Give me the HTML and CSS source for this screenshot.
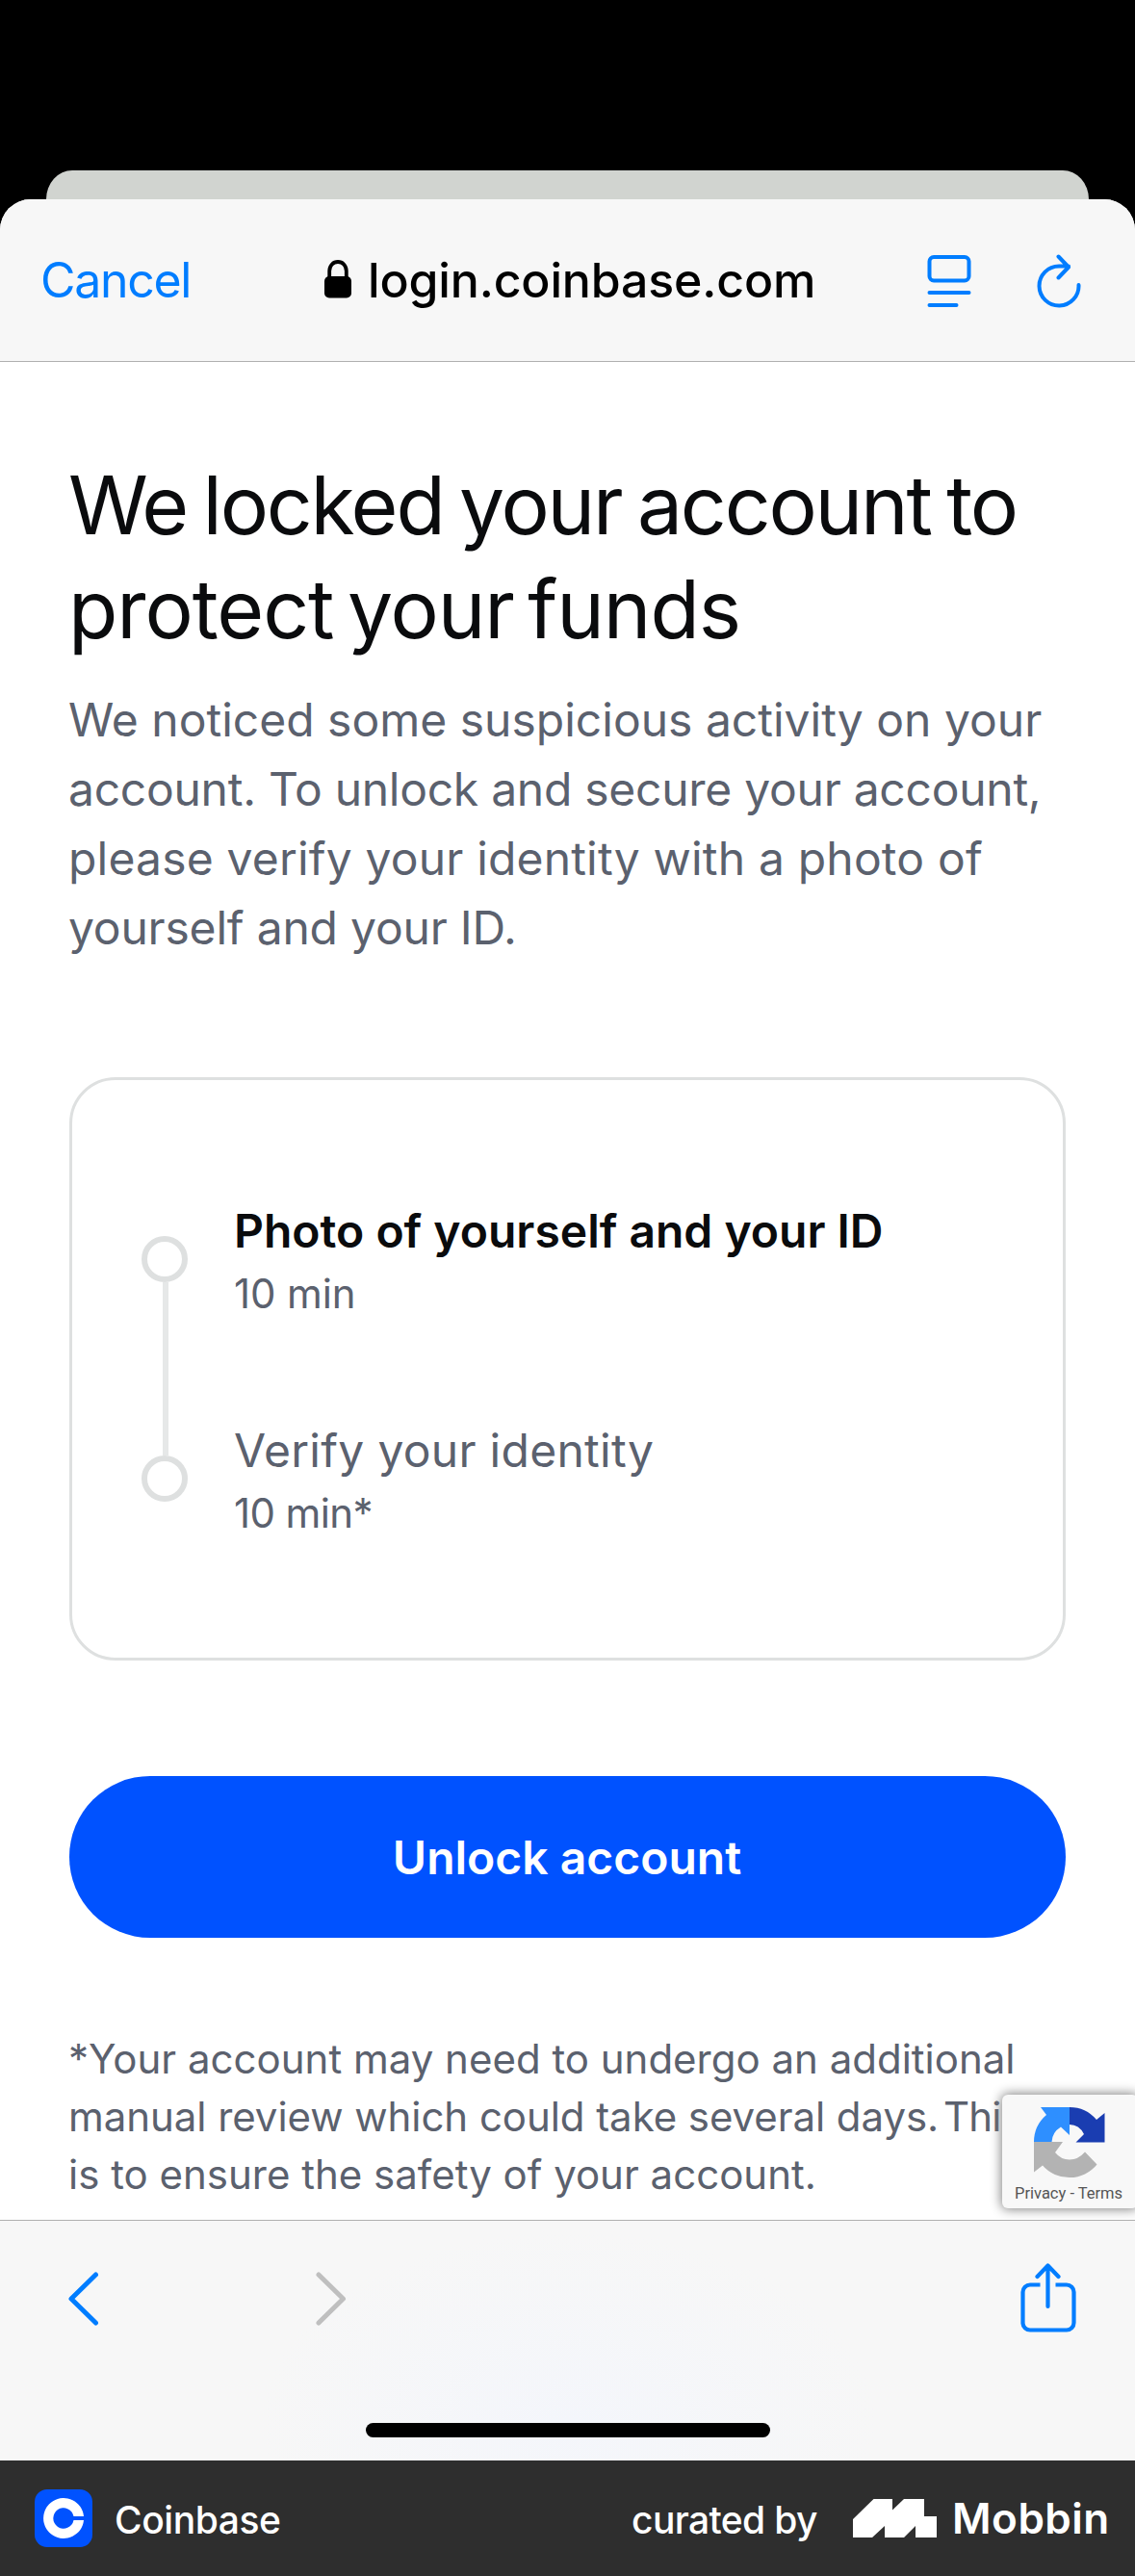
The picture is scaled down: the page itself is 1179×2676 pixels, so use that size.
FILE: index.html
```html
<!DOCTYPE html>
<html lang="en">
<head>
<meta charset="utf-8">
<title>We locked your account</title>
<link rel="stylesheet" href="styles.css">
</head>
<body>
<div class="backdrop"><div class="back-sheet"></div></div>
<div class="sheet">
  <header class="nav">
    <a class="cancel">Cancel</a>
    <div class="address">
      <svg class="lock" width="28" height="40" viewBox="0 0 28 40"><path d="M5.2 19V11.5C5.2 6 9 2 14 2s8.800 4 8.800 9.500V19" fill="none" stroke="#000" stroke-width="3.800"/><rect y="17" width="28" height="22.500" rx="5" fill="#000"/></svg>
      <span class="domain">login.coinbase.com</span>
    </div>
    <div class="nav-actions">
      <svg width="46" height="56" viewBox="0 0 46 56" fill="none" stroke="#007dff" stroke-width="4" stroke-linecap="round"><rect x="2.500" y="3" width="41" height="24.500" rx="4.500"/><path d="M2.500 40h41M2.500 53h28"/></svg>
      <svg width="46" height="56" viewBox="0 0 46 56" fill="none" stroke="#007dff" stroke-width="4" stroke-linecap="round" stroke-linejoin="round"><path d="M43.500 32A20.500 20.500 0 1 1 23 12.500H33M22.500 2.500 33 13.500 22.500 24.500"/></svg>
    </div>
  </header>
  <main class="content">
    <h1 class="title"><span class="line t1">We locked your account to</span> <span class="line t2">protect your funds</span></h1>
    <p class="lead"><span class="line">We noticed some suspicious activity on your</span> <span class="line l2">account. To unlock and secure your account,</span> <span class="line l3">please verify your identity with a photo of</span> <span class="line l4">yourself and your ID.</span></p>
    <section class="card">
      <div class="step">
        <div class="rail"><i class="dot"></i><i class="connector"></i></div>
        <div class="step-text"><div class="step-title active">Photo of yourself and your ID</div><div class="step-time">10 min</div></div>
      </div>
      <div class="step">
        <div class="rail"><i class="dot"></i></div>
        <div class="step-text"><div class="step-title">Verify your identity</div><div class="step-time starred">10 min*</div></div>
      </div>
    </section>
    <button class="unlock">Unlock account</button>
    <p class="note"><span class="line">*Your account may need to undergo an additional</span> <span class="line n2">manual review which could take several days. <span class="tail">This</span></span> <span class="line">is to ensure the safety of your account.</span></p>
    <aside class="captcha">
      <svg width="74" height="75" viewBox="0 0 74 75">
        <path d="M0 37A37 37 0 0 1 13 9L7 1H37V30L28 21.500Q19 27 18.500 37Z" fill="#2e8fff"/>
        <path d="M37 1A37 37 0 0 1 65 14L73.500 7V37.500H43.500L52 29Q47 19 37 19Z" fill="#1a3db1"/>
        <path d="M0 37H30L22 48Q28 55.500 37 55.500T53 47.500L65.500 60.500A37 37 0 0 1 9 61.500L0 68.500Z" fill="#b3b3b3"/>
      </svg>
      <span>Privacy - Terms</span>
    </aside>
  </main>
  <nav class="toolbar">
    <div class="tools">
      <svg width="32" height="56" viewBox="0 0 32 56" fill="none" stroke="#007dff" stroke-width="5" stroke-linecap="round" stroke-linejoin="round"><path d="M28.500 3 3 28l25.500 25"/></svg>
      <svg class="forward" width="32" height="56" viewBox="0 0 32 56" fill="none" stroke="#bfbfbf" stroke-width="5" stroke-linecap="round" stroke-linejoin="round"><path d="M3 3l25.500 25L3 53"/></svg>
      <svg class="share" width="58" height="72" viewBox="0 0 58 72" fill="none" stroke="#007dff" stroke-width="4.200" stroke-linecap="round" stroke-linejoin="round"><path d="M20.500 22.500H10a7.500 7.500 0 0 0-7.500 7.500v32.500A7.500 7.500 0 0 0 10 69.500h38a7.500 7.500 0 0 0 7.500-7.500V30a7.500 7.500 0 0 0-7.500-7.500H36.500" stroke-linecap="butt"/><path d="M28.500 45V3M17.500 14 28.500 2.500 39.500 14"/></svg>
    </div>
    <div class="home"></div>
  </nav>
</div>
<footer class="credit">
  <svg width="60" height="60" viewBox="0 0 60 60"><rect width="60" height="60" rx="13" fill="#0052ff"/><path d="M40.500 28A10.700 10.700 0 1 0 40.500 32H51A21 21 0 1 1 51 28Z" fill="#fff"/></svg>
  <span class="app">Coinbase</span>
  <span class="by">curated by</span>
  <svg class="mark" width="87" height="40" viewBox="0 0 87 40"><path d="M0 21 21.500 0H41V11.500L53 0H74V18H87V40H65V28L53 40H33V28L20 40H0Z" fill="#fff"/></svg>
  <span class="brand">Mobbin</span>
</footer>
</body>
</html>
```
FILE: styles.css
```css
* { box-sizing: border-box; }
body {
  margin: 0;
  width: 1179px;
  height: 2676px;
  display: flex;
  flex-direction: column;
  background: #000;
  font-family: Inter, "Liberation Sans", sans-serif;
  overflow: hidden;
}
svg { display: block; flex: none; }
.backdrop { height: 207px; flex: none; padding: 177px 48px 0; }
.back-sheet { height: 30px; background: #d1d4d0; border-radius: 27px 27px 0 0 / 30px 30px 0 0; }
.sheet {
  height: 2349px;
  flex: none;
  display: flex;
  flex-direction: column;
  background: #fff;
  border-radius: 32px 32px 0 0;
  overflow: hidden;
}
.nav {
  height: 169px;
  flex: none;
  display: flex;
  padding: 57px 56px 0 42px;
  background: #f7f7f7;
  border-bottom: 1px solid #b0b0b0;
}
.cancel { width: 295px; color: #007dff; font-size: 50px; line-height: 54px; letter-spacing: -1.3px; }
.address { display: flex; flex: 1; gap: 17px; }
.lock { margin-top: 6px; }
.domain { font-size: 50px; line-height: 54px; font-weight: 500; letter-spacing: -0.16px; }
.nav-actions { display: flex; gap: 68px; }
.content {
  position: relative;
  height: 1930px;
  flex: none;
  padding: 95px 72px 0;
}
.line { display: block; white-space: nowrap; }
.title { margin: 0 0 0 -1px; font-size: 84px; line-height: 108px; font-weight: 400; color: #0a0b0d; }
.t1 { letter-spacing: -2.2px; word-spacing: -5px; }
.t2 { letter-spacing: -1.1px; word-spacing: -8px; }
.lead { margin: 25px 0 0 -1px; font-size: 48px; line-height: 72px; color: #5b616e; }
.l2 { letter-spacing: -0.27px; }
.l3 { letter-spacing: 0.18px; }
.l4 { letter-spacing: -0.2px; }
.card {
  margin-top: 119px;
  height: 606px;
  padding: 120px 72px 0;
  border: 3px solid #dee0e0;
  border-radius: 48px;
}
.step { display: flex; gap: 48px; height: 228px; color: #5b616e; }
.rail { width: 48px; padding-top: 42px; display: flex; flex-direction: column; align-items: center; }
.dot { width: 48px; height: 48px; flex: none; border: 6px solid #dee0e0; border-radius: 50%; }
.connector { width: 6px; height: 180px; flex: none; margin-left: 2px; background: #e6e8e8; }
.step-title { padding-top: 1px; font-size: 48px; line-height: 72px; letter-spacing: 0.29px; }
.step-title.active { font-weight: 600; color: #0a0b0d; letter-spacing: 0; }
.step-time { margin-top: -1px; font-size: 42px; line-height: 60px; letter-spacing: -0.1px; }
.step-time.starred { letter-spacing: -0.6px; }
.unlock {
  display: block;
  width: 100%;
  height: 168px;
  margin-top: 120px;
  padding: 2px 1px 0 0;
  border: 0;
  border-radius: 84px;
  background: #0052ff;
  color: #fff;
  font: 600 48px/72px Inter, "Liberation Sans", sans-serif;
}
.note { margin: 96px 0 0 -1px; font-size: 42px; line-height: 60px; color: #5b616e; }
.n2 { letter-spacing: -0.06px; }
.tail { margin-left: -7px; letter-spacing: -0.8px; }
.captcha {
  position: absolute;
  left: 1041px;
  top: 1800px;
  width: 141px;
  height: 118px;
  padding: 12px 0 0 33px;
  border-radius: 6px;
  background: #f8f8f8;
  box-shadow: 0 0 12px 1px #808080;
  color: #555;
}
.captcha span {
  display: block;
  margin: 6px 0 0 -20px;
  font: 16.5px/20px Roboto, sans-serif;
  white-space: nowrap;
}
.toolbar {
  position: relative;
  height: 250px;
  flex: none;
  border-top: 1px solid #b0b0b0;
  background: radial-gradient(ellipse 320px 200px at 590px 210px, #f4f6fb, #f7f7f7);
}
.tools { display: flex; align-items: flex-start; padding: 53px 61px 0 71px; }
.forward { margin-left: 225px; }
.share { margin: -9px 0 0 auto; }
.home { width: 420px; height: 15px; margin: 94px 0 0 380px; border-radius: 8px; background: #000; }
.credit {
  height: 120px;
  flex: none;
  display: flex;
  align-items: center;
  padding-left: 36px;
  background: #2e2e2e;
  color: #fff;
  font-size: 39px;
  line-height: 48px;
  font-weight: 500;
}
.app { width: 172px; margin: 4px 0 0 23px; letter-spacing: -0.45px; }
.by { width: 195px; margin: 4px 0 0 365px; letter-spacing: -0.63px; }
.mark { margin-left: 35px; }
.brand { margin: 0 0 0 16px; font-size: 44px; font-weight: 600; letter-spacing: 0.5px; }
```
